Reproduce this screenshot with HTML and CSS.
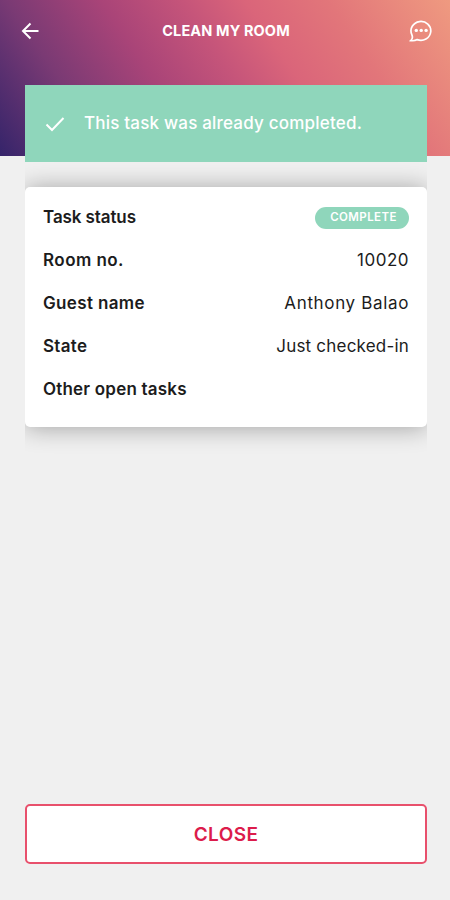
FILE: index.html
```
<!DOCTYPE html>
<html lang="en">
<head>
  <meta charset="UTF-8">
  <meta name="viewport" content="width=device-width, initial-scale=1.0">
  <title>Clean My Room</title>
  <link rel="stylesheet" href="styles.css">
</head>
<body>

  <header>
    <svg class="back" viewBox="0 0 18 18"><path d="M17.5 9H2M9.5 1.5L2 9l7.5 7.5"/></svg>
    <h1>CLEAN MY ROOM</h1>
    <svg class="chat" viewBox="0 0 24 24">
      <path d="M2.8 15.6A9.9 9.4 0 1 1 8.2 20.6C6.5 21.6 4 21.9 1.8 21.6C3.6 20 3.7 17.7 2.8 15.6Z"/>
      <g class="dots"><circle cx="7.3" cy="11.4" r="1.7"/><circle cx="12.2" cy="11.4" r="1.7"/><circle cx="17.1" cy="11.4" r="1.7"/></g>
    </svg>
  </header>

  <main>
    <div class="notice">
      <svg class="check" viewBox="0 0 20 16"><path d="M1.5 8.5L7 14L18.5 2"/></svg>
      <span class="notice-text">This task was already completed.</span>
    </div>

    <div class="card-wrap">
      <div class="card">
        <div class="row"><b class="task">Task status</b><span class="badge">COMPLETE</span></div>
        <div class="row"><b class="room">Room no.</b><span class="number">10020</span></div>
        <div class="row"><b class="guest">Guest name</b><span class="person">Anthony Balao</span></div>
        <div class="row"><b class="state">State</b><span class="checked">Just checked-in</span></div>
        <div class="row"><b class="other">Other open tasks</b></div>
      </div>
    </div>

    <button class="close">CLOSE</button>
  </main>

</body>
</html>
```
FILE: styles.css
```
* {
  box-sizing: border-box;
}
body {
  font-family: Inter, 'Open Sans', sans-serif;
  margin: 0;
  background-color: #f0f0f0;
  color: #1c1c1c;
}
header {
  display: flex;
  align-items: flex-start;
  justify-content: space-between;
  height: 156px;
  padding: 19px 17px 0 21px;
  background: linear-gradient(56deg, #35246a 0%, #7a3a74 20%, #a94478 37%, #c6557a 52%, #da657a 63%, #e2767a 78%, #ef9a80 100%);
}
h1 {
  margin: 3px 0 0 4px;
  font-size: 14.5px;
  line-height: 17px;
  font-weight: 700;
  letter-spacing: 0.12px;
  color: white;
}
svg {
  fill: none;
  stroke: white;
  stroke-width: 2;
}
.back {
  width: 18px;
  height: 18px;
  margin-top: 3px;
}
.chat {
  width: 24px;
  height: 24px;
  stroke-width: 1.7;
}
.dots {
  fill: white;
  stroke: none;
}
main {
  display: flex;
  flex-direction: column;
  height: 779px;
  margin: -71px 23px 0 25px;
}
.notice {
  display: flex;
  align-items: center;
  height: 77px;
  padding-left: 20px;
  background-color: #8fd6bb;
  color: white;
  font-size: 17px;
  font-weight: 500;
  letter-spacing: 0.2px;
}
.notice-text {
  padding-bottom: 2px;
}
.check {
  width: 20px;
  height: 16px;
  margin-right: 19px;
}
.card-wrap {
  padding: 25px 0 28px;
  overflow: hidden;
}
.card {
  height: 240px;
  padding: 8px 18px;
  border-radius: 5px;
  background-color: white;
  box-shadow: 0 1px 24px rgba(0, 0, 0, 0.33);
}
.row {
  display: flex;
  align-items: center;
  justify-content: space-between;
  height: 43.2px;
  font-size: 17px;
}
.row b {
  font-weight: 600;
}
.task {
  letter-spacing: -0.1px;
}
.room {
  letter-spacing: 0.45px;
}
.guest {
  letter-spacing: 0.35px;
}
.state {
  letter-spacing: 0.3px;
}
.other {
  letter-spacing: 0.2px;
}
.number {
  letter-spacing: 0.5px;
}
.person {
  letter-spacing: 0.65px;
}
.checked {
  letter-spacing: 0.2px;
}
.badge {
  width: 94px;
  height: 22px;
  margin-top: 2px;
  padding-left: 3px;
  border-radius: 11px;
  background-color: #8fd6bb;
  color: white;
  font-size: 11.5px;
  line-height: 21px;
  font-weight: 600;
  letter-spacing: 0.4px;
  text-align: center;
}
.close {
  height: 60px;
  margin-top: auto;
  border: 2px solid #e8506c;
  border-radius: 5px;
  background-color: white;
  color: #dc1c4b;
  font-family: inherit;
  font-size: 19px;
  font-weight: 600;
  letter-spacing: 0.4px;
}
```
